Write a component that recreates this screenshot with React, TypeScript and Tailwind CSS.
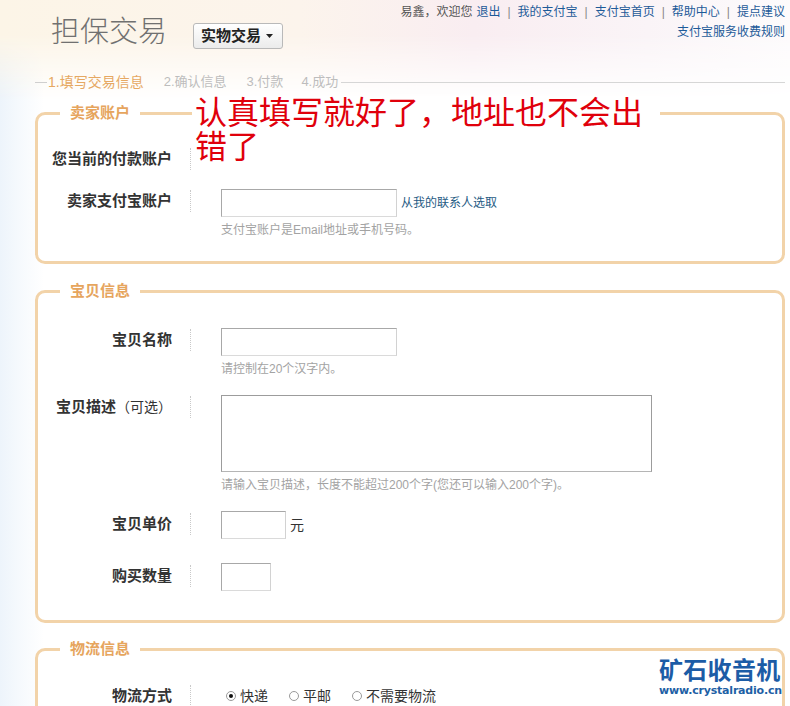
import React from 'react';

const label =
  "w-[153px] shrink-0 pr-[18px] border-r border-dotted border-[#c9c9c9] text-right text-[15px] leading-[22px] font-bold text-[#333]";
const hint = "mt-[4px] text-[12px] leading-[18px] text-[#a3a3a3]";
const input =
  "block h-[28px] border border-[#a8a8a8] border-r-[#d2d2d2] border-b-[#dadada] bg-white outline-none";

const Box = ({ title, className, children }: { title: string; className: string; children: React.ReactNode }) => (
  <fieldset className={`w-[750px] min-w-0 rounded-[10px] border-[3px] border-[#f2d3a9] ${className}`}>
    <legend className="ml-[22px] px-[10px] text-[15px] leading-[20px] font-bold text-[#e6a55e]">{title}</legend>
    {children}
  </fieldset>
);

const Radio = ({ checked, text }: { checked?: boolean; text: string }) => (
  <span className="flex items-center">
    <span className="flex h-[10px] w-[10px] items-center justify-center rounded-full border border-[#9a9a9a] bg-white">
      {checked && <span className="h-[4px] w-[4px] rounded-full bg-[#111]" />}
    </span>
    <span className="ml-[4px] text-[14px] leading-[20px] text-[#333]">{text}</span>
  </span>
);

export default function App() {
  const topLinks = ['我的支付宝', '支付宝首页', '帮助中心', '提点建议'];

  return (
    <div className="relative h-[706px] w-[790px] overflow-hidden bg-[linear-gradient(90deg,#edf4fb_0px,#f5f9fd_18px,#ffffff_44px)] font-['Liberation_Sans','Noto_Sans_CJK_SC',sans-serif] text-[#333]">
      {/* header: tint layer and content share one grid cell */}
      <div className="grid">
        <div className="col-start-1 row-start-1 bg-[linear-gradient(90deg,#fcf5e7_0%,#fcf4ec_38%,#f9edf1_60%,#faf4f7_82%,#fdfbfc_100%)] [mask-image:linear-gradient(180deg,#000_0%,#000_35%,transparent_100%)]" />
        <div className="relative col-start-1 row-start-1 pb-[8px]">
          <div className="flex h-[72px] justify-between">
            <div className="flex items-start pl-[51px] pt-[14px]">
              <h1 className="text-[29px] leading-[36px] font-light text-[#707070]">担保交易</h1>
              <button className="ml-[26px] mt-[9px] flex h-[26px] items-center rounded-[3px] border border-[#b9b9b9] bg-[linear-gradient(180deg,#ffffff,#ebebeb)] pl-[7px] pr-[9px]">
                <span className="text-[15px] leading-[20px] font-bold text-[#222]">实物交易</span>
                <svg width="7" height="4" viewBox="0 0 7 4" className="ml-[5px]">
                  <path d="M0 0h7L3.5 4z" fill="#222" />
                </svg>
              </button>
            </div>
            <div className="pr-[5px] pt-[2px] text-right text-[12px] leading-[20px]">
              <div className="flex items-center justify-end">
                <span className="text-[#555]">易鑫，欢迎您</span>
                <a className="ml-[4px] text-[#1d5a98]">退出</a>
                {topLinks.map((t) => (
                  <React.Fragment key={t}>
                    <span className="mx-[7px] text-[#888]">|</span>
                    <a className="text-[#1d5a98]">{t}</a>
                  </React.Fragment>
                ))}
              </div>
              <a className="text-[#1d5a98]">支付宝服务收费规则</a>
            </div>
          </div>

          {/* steps */}
          <div className="flex h-[20px] items-center pl-[35px] pr-[5px]">
            <span className="h-px w-[12px] bg-[#cfcfcf]" />
            <span className="ml-[1px] text-[14px] leading-[20px] text-[#e6a862]">1.填写交易信息</span>
            <span className="ml-[20px] text-[13px] leading-[20px] text-[#bdbdbd]">2.确认信息</span>
            <span className="ml-[20px] text-[13px] leading-[20px] text-[#bdbdbd]">3.付款</span>
            <span className="ml-[18px] text-[13px] leading-[20px] text-[#bdbdbd]">4.成功</span>
            <span className="ml-[3px] h-px flex-1 bg-[#d6d6d6]" />
          </div>
        </div>
      </div>

      <div className="pl-[35px]">
        <Box title="卖家账户" className="mt-[3px] bg-white">
          <div className="pt-[25px] pb-[22px]">
            <div className="flex items-start">
              <div className={label}>您当前的付款账户</div>
            </div>
            <div className="mt-[19px] flex items-start">
              <div className={`${label} mt-[1px]`}>卖家支付宝账户</div>
              <div className="ml-[30px]">
                <div className="flex items-center">
                  <input type="text" className={`${input} w-[176px]`} />
                  <a className="ml-[4px] text-[12px] leading-[18px] text-[#1f5b84]">从我的联系人选取</a>
                </div>
                <div className={hint}>支付宝账户是Email地址或手机号码。</div>
              </div>
            </div>
          </div>
        </Box>

        <Box title="宝贝信息" className="mt-[17px] bg-white">
          <div className="pt-[27px] pb-[29px]">
            <div className="flex items-start">
              <div className={`${label} mt-[1px]`}>宝贝名称</div>
              <div className="ml-[30px]">
                <input type="text" className={`${input} w-[176px]`} />
                <div className={hint}>请控制在20个汉字内。</div>
              </div>
            </div>
            <div className="mt-[17px] flex items-start">
              <div className={`${label} mt-[1px]`}>
                宝贝描述<span className="text-[14px] font-normal">（可选）</span>
              </div>
              <div className="ml-[30px]">
                <textarea className="block h-[77px] w-[431px] resize-none border border-[#9c9c9c] border-b-[#b5b5b5] bg-white outline-none" />
                <div className={hint}>请输入宝贝描述，长度不能超过200个字(您还可以输入200个字)。</div>
              </div>
            </div>
            <div className="mt-[17px] flex items-start">
              <div className={`${label} mt-[2px]`}>宝贝单价</div>
              <div className="ml-[30px] flex items-center">
                <input type="text" className={`${input} w-[65px]`} />
                <span className="ml-[4px] text-[14px] leading-[20px] text-[#333]">元</span>
              </div>
            </div>
            <div className="mt-[24px] flex items-start">
              <div className={`${label} mt-[2px]`}>购买数量</div>
              <div className="ml-[30px]">
                <input type="text" className={`${input} w-[50px]`} />
              </div>
            </div>
          </div>
        </Box>

        <Box title="物流信息" className="mt-[16px] bg-white">
          <div className="pt-[26px] pb-[40px]">
            <div className="flex items-center">
              <div className={label}>物流方式</div>
              <div className="ml-[35px] flex items-center gap-[21px]">
                <Radio checked text="快递" />
                <Radio text="平邮" />
                <Radio text="不需要物流" />
              </div>
            </div>
          </div>
        </Box>
      </div>

      {/* annotation over the first box */}
      <div className="absolute left-[192px] top-[96px] w-[468px] bg-white pl-[3px] text-[32px] leading-[34px] text-[#e0000b]">
        认真填写就好了，地址也不会出
        <br />
        错了
      </div>

      {/* watermark */}
      <div className="absolute left-[659px] top-[658px]">
        <div className="text-[24px] leading-[26px] font-bold tracking-[0.3px] text-[#1c5ca6]">矿石收音机</div>
        <div className="font-['DejaVu_Sans',sans-serif] text-[11px] leading-[14px] font-bold tracking-[-0.2px] text-[#1e5fa5]">
          www.crystalradio.cn
        </div>
      </div>
    </div>
  );
}
